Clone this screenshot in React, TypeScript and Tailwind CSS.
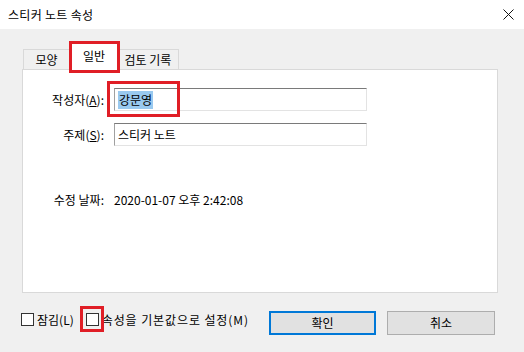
import React from 'react';

const font = { fontFamily: '"Noto Sans CJK KR", "Noto Sans", sans-serif' };

const Field: React.FC<{ label: React.ReactNode; children: React.ReactNode; className?: string }> = ({ label, children, className }) => (
    <div className={`flex items-center ${className || ''}`}>
        <div className="w-[83px] text-right pr-[2px]">{label}</div>
        <div className="ml-[8px]">{children}</div>
    </div>
);

const Checkbox: React.FC<{ label: string; marked?: boolean; labelClass?: string }> = ({ label, marked, labelClass }) => (
    <div className="flex items-center h-[13px]">
        <div className="relative">
            <div className="w-[13px] h-[13px] border border-[#333333] bg-white" />
            {marked && <div className="absolute -left-[6px] -top-[7px] w-[24px] h-[26px] border-[3px] border-[#e01e26]" />}
        </div>
        <span className={`ml-[3px] leading-[13px] ${labelClass || ''}`}>{label}</span>
    </div>
);

export default function App() {
    const inputClass = "w-[253px] h-[23px] bg-white border border-[#e3e3e3] border-t-[#7a7a7a] border-l-[#a0a0a0] flex items-center pl-[3px]";

    return (
        <div className="w-[524px] h-[352px] bg-[#f0f0f0] flex flex-col text-[12px] text-black leading-none" style={font}>
            <div className="h-[29px] bg-white flex items-center justify-between pl-[8px] pr-[9px]">
                <span className="text-[12px] tracking-[0.3px]">스티커 노트 속성</span>
                <svg width="11" height="11" viewBox="0 0 11 11" className="mr-[1px]">
                    <path d="M0.5 0.5 L10.5 10.5 M10.5 0.5 L0.5 10.5" stroke="#111" strokeWidth="1" fill="none" />
                </svg>
            </div>

            <div className="pl-[22px] pt-[14px]">
                <div className="flex items-end h-[26px] relative z-10">
                    <div className="ml-[1px] w-[47px] h-[20px] border border-b-0 border-[#d9d9d9] bg-[#f0f0f0] flex items-center justify-center">모양</div>
                    <div className="relative w-[48px] h-[27px] -mb-[1px] border border-b-0 border-[#d9d9d9] bg-white flex items-center justify-center pb-[2px]">
                        일반
                        <div className="absolute -left-[2px] -top-[3px] w-[51px] h-[32px] border-[3px] border-[#e01e26]" />
                    </div>
                    <div className="w-[61px] h-[20px] border border-b-0 border-l-0 border-[#d9d9d9] bg-[#f0f0f0] flex items-center justify-center">검토 기록</div>
                </div>

                <div className="w-[476px] h-[224px] bg-white border border-[#d9d9d9] pt-[18px]">
                    <Field label={<>작성자(<u>A</u>):</>}>
                        <div className="relative">
                            <div className={inputClass}>
                                <span className="bg-[#99c9ef] h-[18px] flex items-center px-[1px]">강문영</span>
                            </div>
                            <div className="absolute -left-[7px] -top-[7px] w-[73px] h-[36px] border-[3px] border-[#e01e26]" />
                        </div>
                    </Field>
                    <Field label={<>주제(<u>S</u>):</>} className="mt-[12px]">
                        <div className={inputClass}>스티커 노트</div>
                    </Field>
                    <Field label="수정 날짜:" className="mt-[48px]">
                        <span>2020-01-07 오후 2:42:08</span>
                    </Field>
                </div>
            </div>

            <div className="flex items-start pl-[21px] mt-[18px]">
                <div className="w-[248px] flex items-center mt-[2px]">
                    <Checkbox label="잠김(L)" />
                    <div className="ml-[12px]">
                        <Checkbox label="속성을 기본값으로 설정(M)" labelClass="tracking-[0.9px]" marked />
                    </div>
                </div>
                <button className="w-[107px] h-[24px] bg-[#e1e1e1] border-2 border-[#0078d7] flex items-center justify-center">확인</button>
                <button className="ml-[11px] w-[108px] h-[24px] bg-[#e1e1e1] border border-[#adadad] flex items-center justify-center">취소</button>
            </div>
        </div>
    );
}
